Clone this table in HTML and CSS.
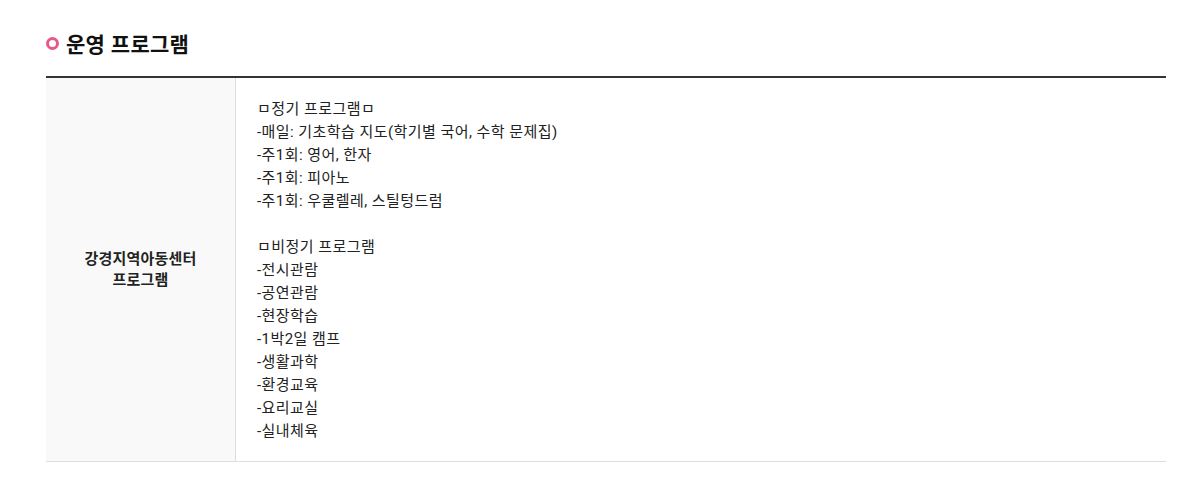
FILE: index.html
```html
<!DOCTYPE html>
<html lang="ko">
<head>
<meta charset="utf-8">
<link rel="stylesheet" href="styles.css">
</head>
<body>
<div class="wrap">
  <h2 class="title"><span class="dot"></span>운영 프로그램</h2>
  <div class="table">
    <div class="head">강경지역아동센터<br>프로그램</div>
    <div class="body">
      <p>ㅁ정기 프로그램ㅁ</p>
      <p>-매일: 기초학습 지도(학기별 국어, 수학 문제집)</p>
      <p>-주1회: 영어, 한자</p>
      <p>-주1회: 피아노</p>
      <p>-주1회: 우쿨렐레, 스틸텅드럼</p>
      <p>&nbsp;</p>
      <p>ㅁ비정기 프로그램</p>
      <p>-전시관람</p>
      <p>-공연관람</p>
      <p>-현장학습</p>
      <p>-1박2일 캠프</p>
      <p>-생활과학</p>
      <p>-환경교육</p>
      <p>-요리교실</p>
      <p>-실내체육</p>
    </div>
  </div>
</div>
</body>
</html>
```

FILE: styles.css
```css
* { box-sizing: border-box; }
html, body { margin: 0; padding: 0; background: #fff; }
body {
  font-family: Roboto, "Noto Sans CJK KR", sans-serif;
  color: #222;
}
.wrap {
  width: 1120px;
  margin-left: 46px;
  padding-top: 28px;
}
.title {
  display: flex;
  align-items: center;
  gap: 7px;
  margin: 0;
  height: 30px;
  font-size: 21px;
  font-weight: 700;
  color: #111;
  letter-spacing: 0.3px;
}
.dot {
  width: 13px;
  height: 13px;
  border: 3.5px solid #e8578a;
  border-radius: 50%;
}
.table {
  display: flex;
  margin-top: 18px;
  border-top: 2px solid #333;
  border-bottom: 1px solid #ddd;
}
.head {
  width: 190px;
  flex: none;
  background: #f9f9f9;
  border-right: 1px solid #ddd;
  display: flex;
  align-items: center;
  justify-content: center;
  text-align: center;
  font-size: 15px;
  font-weight: 700;
  line-height: 21px;
  letter-spacing: 0.2px;
  color: #222;
}
.body {
  flex: 1;
  padding: 20px 21px 18px 21px;
  font-size: 15px;
  line-height: 23px;
  letter-spacing: 0.45px;
  color: #222;
}
.body p { margin: 0; }
```
